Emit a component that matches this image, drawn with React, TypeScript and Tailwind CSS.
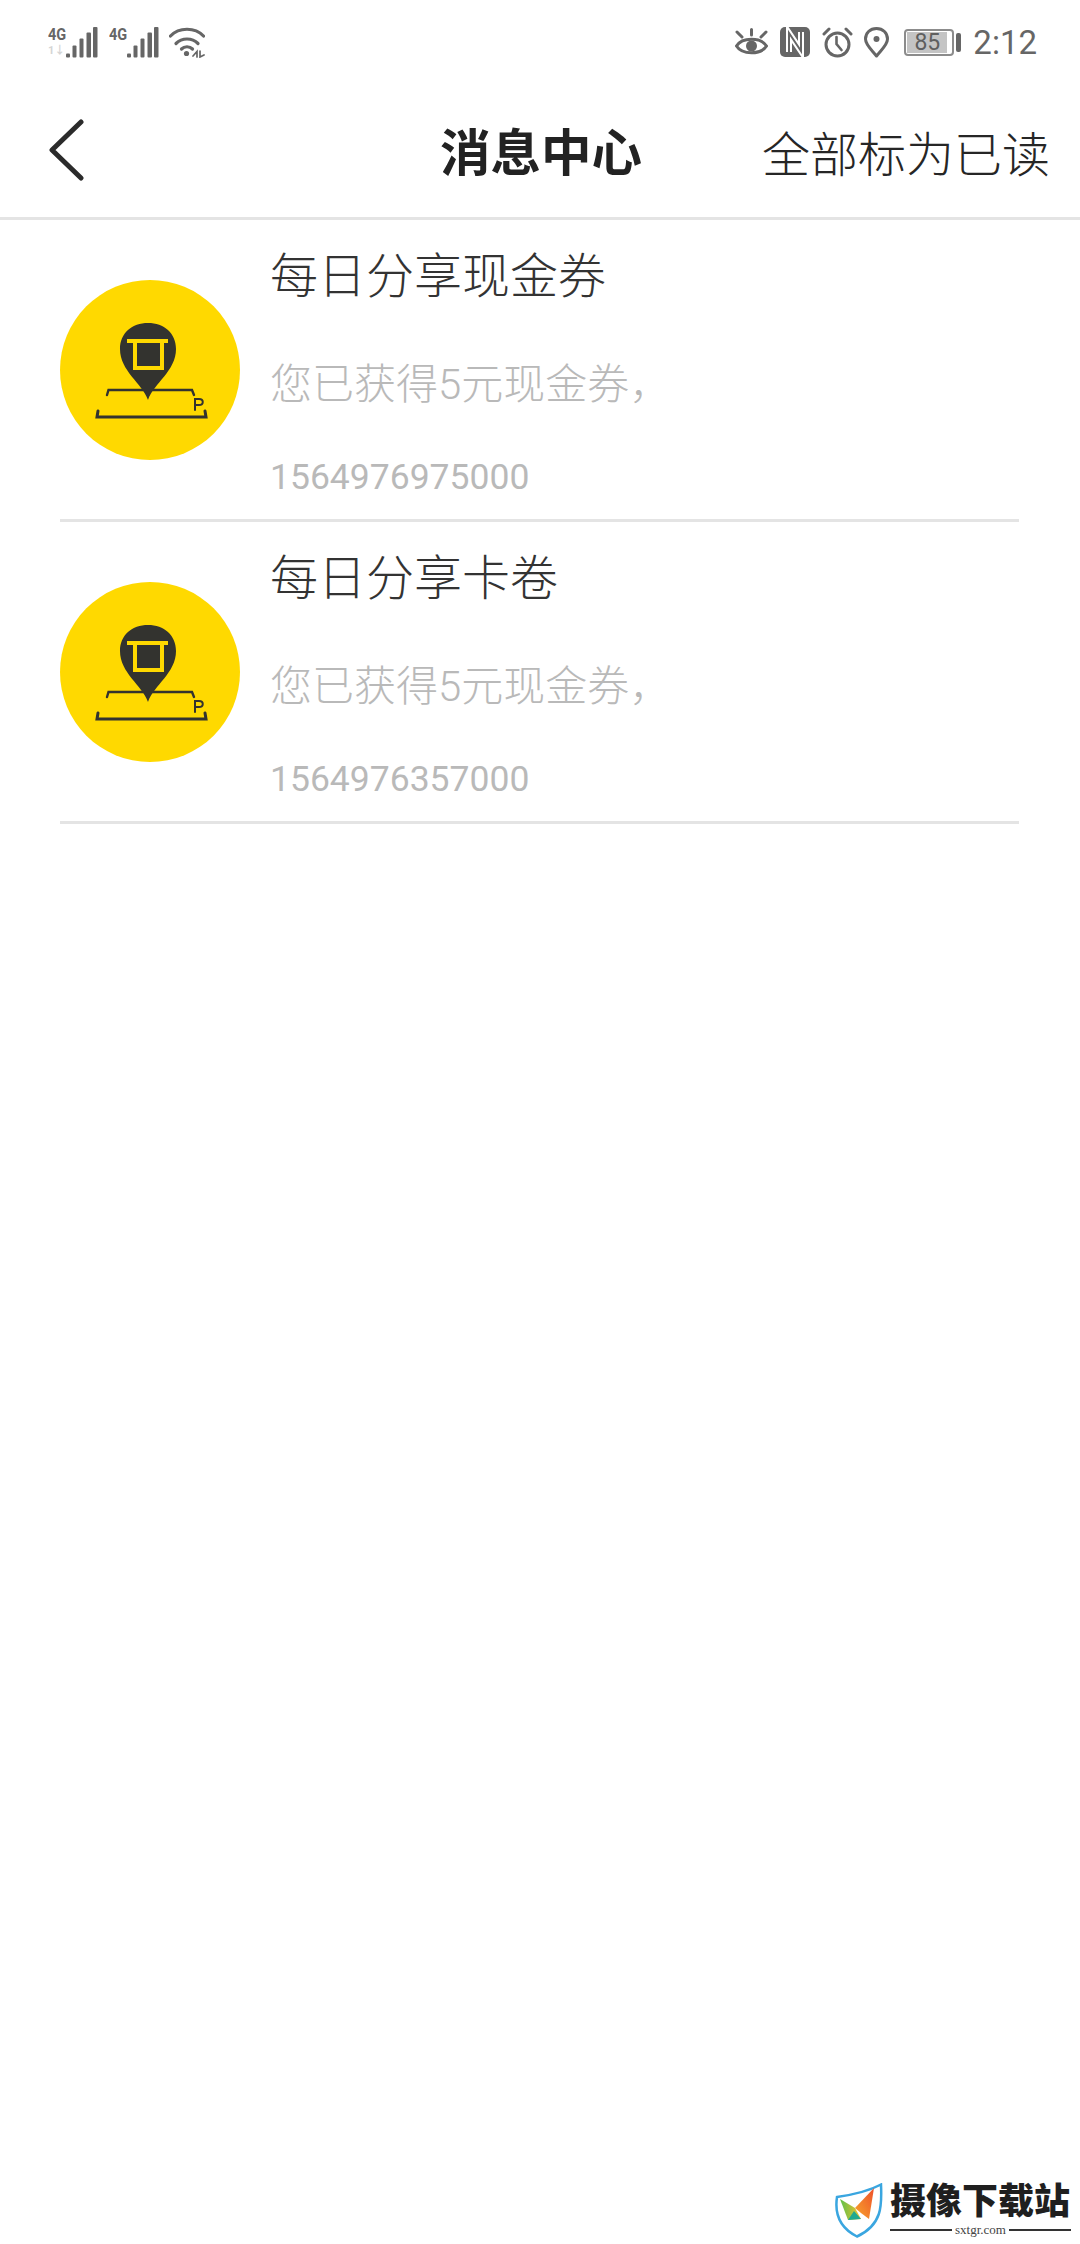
const messages = [
  { title: '每日分享现金券', body: '您已获得5元现金券，', stamp: '1564976975000' },
  { title: '每日分享卡卷', body: '您已获得5元现金券，', stamp: '1564976357000' },
];

function Signal({ first }: { first?: boolean }) {
  return (
    <div className="flex h-[31px] w-[50px] items-start">
      <div className="flex w-[18px] flex-col font-bold">
        <span className="h-[17px] origin-top scale-y-[1.2] text-[14.5px] leading-[14px] whitespace-nowrap text-[#666]">4G</span>
        <span className="h-[14px] text-[11px] leading-[14px] whitespace-nowrap text-[#d5d5d5]">{first ? '1↓' : ''}</span>
      </div>
      <svg width="32" height="31" viewBox="18 0 32 31" className="shrink-0">
        <g fill="#666">
          <rect x="18" y="26.5" width="4" height="4" rx="1" />
          <rect x="24.5" y="18.5" width="4" height="12" rx="1" />
          <rect x="31.5" y="11.5" width="4" height="19" rx="1" />
          <rect x="38.5" y="5.5" width="4.5" height="25" rx="1" />
          <rect x="45" y="0" width="4.5" height="30.5" rx="1" />
        </g>
      </svg>
    </div>
  );
}

function Wifi() {
  return (
    <svg width="36" height="31" viewBox="0 0 36 31" fill="none" stroke="#666" strokeWidth="3.2" strokeLinecap="round">
      <path d="M1.5 9 C10 0 26 0 34.5 9" />
      <path d="M7 16.5 C13 10.5 23 10.5 29 16.5" />
      <path d="M12.5 22 C15.5 19 20.5 19 23.5 22" />
      <circle cx="17.5" cy="26.5" r="2.6" fill="#666" stroke="none" />
      <path d="M24 29 L28 24.5 V30 M31 24 V30 L35 28" strokeWidth="1.7" />
    </svg>
  );
}

function EyeIcon() {
  return (
    <svg width="33" height="29" viewBox="0 0 33 29" fill="none" stroke="#666" strokeWidth="3" strokeLinecap="round">
      <path d="M1.5 18 C7 9 26 9 31.5 18 C26 27 7 27 1.5 18 Z" />
      <circle cx="16.5" cy="18" r="5.5" fill="#666" stroke="none" />
      <path d="M2 4 L7 9 M16.5 1.5 V7 M31 4 L26 9" />
    </svg>
  );
}

function NfcIcon() {
  return (
    <svg width="30" height="30" viewBox="0 0 30 30" fill="none">
      <rect width="30" height="30" rx="5" fill="#666" />
      <path d="M9 25 V6 L21 24 V5" stroke="#fff" strokeWidth="6" />
      <path d="M9 30 V6 L21 24 V0" stroke="#666" strokeWidth="2" />
    </svg>
  );
}

function AlarmIcon() {
  return (
    <svg width="31" height="31" viewBox="0 0 31 31" fill="none" stroke="#666" strokeWidth="3" strokeLinecap="round">
      <circle cx="15.5" cy="17.5" r="11.5" />
      <path d="M14.5 10 V17 L19.5 23" strokeWidth="2.6" />
      <path d="M2 7 L7 2 M29 7 L24 2" />
    </svg>
  );
}

function PinIcon() {
  return (
    <svg width="25" height="31" viewBox="0 0 25 31" fill="none" stroke="#666" strokeWidth="3">
      <path d="M12.5 29 C8 23 1.5 18 1.5 12 C1.5 6 6 1.5 12.5 1.5 C19 1.5 23.5 6 23.5 12 C23.5 18 17 23 12.5 29 Z" strokeLinejoin="round" />
      <circle cx="12.5" cy="12" r="3" fill="#666" stroke="none" />
    </svg>
  );
}

function Battery() {
  return (
    <div className="flex items-center gap-[2px]">
      <div className="flex h-[27px] w-[50px] items-center rounded-[4px] border-2 border-[#8c8c8c] p-[1px]">
        <div className="flex h-full w-[40px] items-center justify-center bg-[#c4c4c4] text-[23px] leading-none text-[#5f5f5f]">85</div>
      </div>
      <div className="h-[19px] w-[5px] rounded-[2px] bg-[#666]" />
    </div>
  );
}

function StatusBar() {
  return (
    <div className="flex h-[88px] items-center justify-between pb-[4px] pl-[48px] pr-[43px]">
      <div className="flex items-center">
        <Signal first />
        <div className="ml-[11px]">
          <Signal />
        </div>
        <div className="ml-[10px]">
          <Wifi />
        </div>
      </div>
      <div className="flex items-center">
        <EyeIcon />
        <div className="ml-[12px]">
          <NfcIcon />
        </div>
        <div className="ml-[12px]">
          <AlarmIcon />
        </div>
        <div className="ml-[11px]">
          <PinIcon />
        </div>
        <div className="ml-[15px]">
          <Battery />
        </div>
        <span className="ml-[12px] text-[33px] leading-none text-[#666]">2:12</span>
      </div>
    </div>
  );
}

function NavBar() {
  return (
    <div className="relative flex h-[132px] items-center justify-between border-b-[3px] border-[#e4e4e4] pl-[49px] pr-[30px]">
      <svg width="35" height="62" viewBox="0 0 35 62" fill="none" stroke="#2b2b2b" strokeWidth="5" strokeLinecap="round" strokeLinejoin="round" className="mb-[6px]">
        <path d="M32 3 L3 31 L32 59" />
      </svg>
      <h1 className="absolute left-[440px] top-[31px] text-[50.5px] leading-[70px] font-bold text-[#222]">消息中心</h1>
      <button className="mt-[6px] text-[48px] leading-[70px] font-light text-[#262626]">全部标为已读</button>
    </div>
  );
}

// round yellow parking-lot logo
function LotIcon() {
  return (
    <svg width="180" height="180" viewBox="0 0 180 180" className="shrink-0">
      <circle cx="90" cy="90" r="90" fill="#ffd900" />
      <g fill="none" stroke="#33332f" strokeLinecap="round">
        <path d="M47 115 L48.5 110 H132 L134 115" strokeWidth="2.4" />
        <path d="M38 131 L37 137 H146 L145 131" strokeWidth="3" />
        <path d="M135 130 V119 H139 C144 119 144 125 139 125 H135" strokeWidth="2" />
      </g>
      <path d="M88 120 C82 103 60 91 60 69 C60 53 72 43 88 43 C104 43 116 53 116 69 C116 91 94 103 88 120 Z" fill="#33332f" />
      <path d="M67 61 H108 M75 61 V88 H102 V61" fill="none" stroke="#ffd900" strokeWidth="4" />
    </svg>
  );
}

function MessageRow({ title, body, stamp }: { title: string; body: string; stamp: string }) {
  return (
    <div className="flex h-[302px] border-b-[3px] border-[#e4e4e4]">
      <div className="mt-[60px]">
        <LotIcon />
      </div>
      <div className="ml-[30px] flex flex-col">
        <div className="mt-[22px] text-[48px] leading-[70px] font-light text-[#333]">{title}</div>
        <div className="mt-[43px] text-[42px] leading-[60px] font-light text-[#b9b9b9]">{body}</div>
        <div className="mt-[39px] text-[35.5px] leading-[46px] text-[#b9b9b9]">{stamp}</div>
      </div>
    </div>
  );
}

function Watermark() {
  return (
    <div className="absolute left-[835px] top-[2183px] flex items-start">
      <svg width="48" height="55" viewBox="0 0 48 55">
        <defs>
          <linearGradient id="wing" x1="0" y1="0" x2="1" y2="0">
            <stop offset="0" stopColor="#5cc04a" />
            <stop offset="1" stopColor="#f6c22e" />
          </linearGradient>
          <linearGradient id="wingRight" x1="0" y1="1" x2="1" y2="0">
            <stop offset="0" stopColor="#f7a72c" />
            <stop offset="1" stopColor="#ee4f2a" />
          </linearGradient>
        </defs>
        <path d="M2 14 C16 12 32 9 46 1.5 C47 23 47 42 22 53.5 C7 46 -1 34 2 14 Z" fill="#fff" stroke="#3aa6e0" strokeWidth="2.5" />
        <path d="M5 16 L20 25 L26 36 L13 37 Z" fill="url(#wing)" />
        <path d="M13 37 L19 28 L26 36 Z" fill="#1fa98f" />
        <path d="M39 5 L34 36 L26 30 L20 25 Z" fill="url(#wingRight)" />
      </svg>
      <div className="-mt-[1px] ml-[7px] flex flex-col">
        <div className="text-[36px] leading-[40px] font-black whitespace-nowrap text-[#1f1f1f]">摄像下载站</div>
        <div className="mt-[1px] flex items-center gap-[3px]">
          <div className="h-[2px] w-[62px] bg-[#333]" />
          <span className="font-['Liberation_Serif',serif] text-[13px] leading-[14px] text-[#444]">sxtgr.com</span>
          <div className="h-[2px] w-[62px] bg-[#333]" />
        </div>
      </div>
    </div>
  );
}

export default function App() {
  return (
    <div className="relative h-[2244px] w-[1080px] overflow-hidden bg-white font-['Roboto','Noto_Sans_CJK_SC',sans-serif]">
      <StatusBar />
      <NavBar />
      <div className="ml-[60px] mr-[61px]">
        {messages.map((m) => (
          <MessageRow key={m.stamp} title={m.title} body={m.body} stamp={m.stamp} />
        ))}
      </div>
      <Watermark />
    </div>
  );
}
